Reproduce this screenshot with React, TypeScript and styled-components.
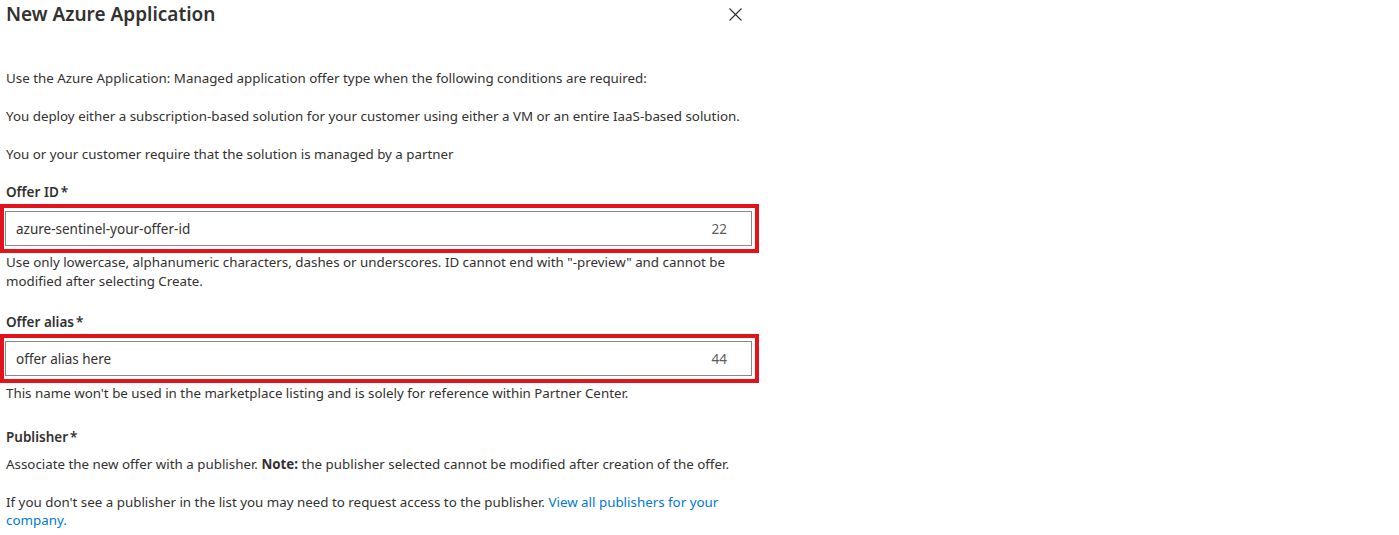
import React from "react";
import styled, { createGlobalStyle } from "styled-components";

const Global = createGlobalStyle`
  html, body { margin: 0; padding: 0; background: #ffffff; }
  body {
    font-family: "Noto Sans", "Open Sans", "Liberation Sans", sans-serif;
    color: #323130;
    -webkit-font-smoothing: antialiased;
  }
`;

const Panel = styled.div`
  width: 759px;
  display: flex;
  flex-direction: column;
`;

const Header = styled.header`
  display: flex;
  align-items: center;
  justify-content: space-between;
  height: 28px;
  padding: 0 16px 0 6px;
`;

const Title = styled.h1`
  margin: 0;
  font-size: 19px;
  line-height: 28px;
  font-weight: 600;
  color: #323130;
`;

const CloseButton = styled.button`
  width: 16px;
  height: 16px;
  padding: 0;
  border: none;
  background: transparent;
  display: flex;
  align-items: center;
  justify-content: center;
  cursor: pointer;
`;

const Body = styled.div`
  display: flex;
  flex-direction: column;
  padding: 40px 0 0 6px;
`;

const Para = styled.p<{ $mt?: number; $lh?: number }>`
  margin: ${(p) => p.$mt ?? 0}px 0 0 0;
  font-size: 13.35px;
  line-height: ${(p) => p.$lh ?? 20}px;
  color: #323130;
  white-space: nowrap;
`;

const Label = styled.label<{ $mt: number }>`
  margin-top: ${(p) => p.$mt}px;
  font-size: 13.5px;
  line-height: 20px;
  font-weight: 600;
  color: #323130;
  &::after {
    content: "*";
    margin-left: 2px;
    font-weight: 600;
  }
`;

const Highlight = styled.div<{ $mt: number }>`
  margin: ${(p) => p.$mt}px 0 0 -6px;
  width: 759px;
  box-sizing: border-box;
  border: 4px solid #e3131b;
  padding: 3px 3px 3px 1px;
`;

const Field = styled.div`
  height: 35px;
  box-sizing: border-box;
  border: 1px solid #8a8886;
  display: flex;
  align-items: center;
  justify-content: space-between;
  padding: 0 24px 0 10px;
  font-size: 13.5px;
`;

const FieldValue = styled.span`
  color: #323130;
`;

const Counter = styled.span`
  color: #605e5c;
`;

const Link = styled.a`
  color: #0078d4;
  text-decoration: none;
`;

function CloseIcon() {
  return (
    <svg width="13" height="13" viewBox="0 0 13 13" fill="none">
      <path d="M0.5 0.5 L12.5 12.5 M12.5 0.5 L0.5 12.5" stroke="#323130" strokeWidth="1.1" />
    </svg>
  );
}

export default function App() {
  return (
    <>
      <Global />
      <Panel>
        <Header>
          <Title>New Azure Application</Title>
          <CloseButton aria-label="Close">
            <CloseIcon />
          </CloseButton>
        </Header>
        <Body>
          <Para>
            Use the Azure Application: Managed application offer type when the following conditions are required:
          </Para>
          <Para $mt={18}>
            You deploy either a subscription-based solution for your customer using either a VM or an entire IaaS-based solution.
          </Para>
          <Para $mt={18}>You or your customer require that the solution is managed by a partner</Para>

          <Label $mt={18}>Offer ID</Label>
          <Highlight $mt={2}>
            <Field>
              <FieldValue>azure-sentinel-your-offer-id</FieldValue>
              <Counter>22</Counter>
            </Field>
          </Highlight>
          <Para $lh={19}>
            Use only lowercase, alphanumeric characters, dashes or underscores. ID cannot end with "-preview" and cannot be
            <br />
            modified after selecting Create.
          </Para>

          <Label $mt={21}>Offer alias</Label>
          <Highlight $mt={2}>
            <Field>
              <FieldValue>offer alias here</FieldValue>
              <Counter>44</Counter>
            </Field>
          </Highlight>
          <Para>This name won't be used in the marketplace listing and is solely for reference within Partner Center.</Para>

          <Label $mt={24}>Publisher</Label>
          <Para $mt={7}>
            Associate the new offer with a publisher. <strong>Note:</strong> the publisher selected cannot be modified after
            creation of the offer.
          </Para>
          <Para $mt={19} $lh={18}>
            If you don't see a publisher in the list you may need to request access to the publisher.{" "}
            <Link href="#">View all publishers for your</Link>
            <br />
            <Link href="#">company.</Link>
          </Para>
        </Body>
      </Panel>
    </>
  );
}
